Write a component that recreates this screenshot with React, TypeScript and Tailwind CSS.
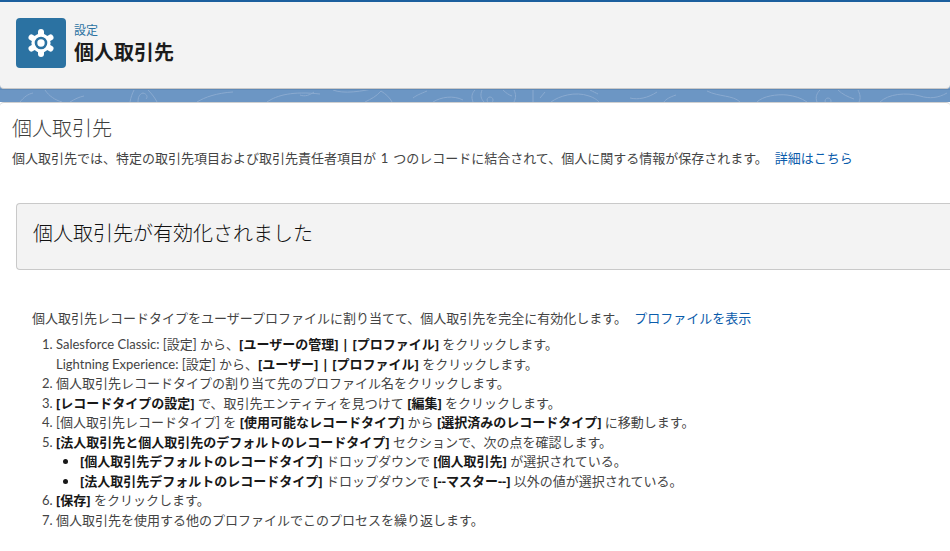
export default function App() {
  const b = "font-bold text-[#181818] font-['Noto_Sans','Noto_Sans_CJK_JP',sans-serif]";
  return (
    <div className="w-[950px] h-[551px] overflow-hidden bg-white text-[#444444] text-[13px] leading-[19.5px]" style={{ fontFamily: '"Lato","Noto Sans CJK JP",sans-serif' }}>
      <div className="bg-[#6c96c4]">
        <div className="h-[2px] bg-[#1b5f9e]" />
        <div className="h-[87px] bg-[#f3f3f3] rounded-b-[4px] border-b border-[#c9c9c9] flex items-start pt-4 pl-4 gap-2">
          <div className="w-[50px] h-[50px] rounded-[4px] bg-[#2b72a2] flex items-center justify-center">
            <svg viewBox="0 0 28 28" className="w-[28px] h-[28px]" fill="none">
              <circle cx="14" cy="14" r="9.6" fill="#fff" />
              <g stroke="#fff" strokeWidth="6" strokeLinecap="round">
                <path d="M14 14V3" />
                <path d="M14 14v11" />
                <path d="M14 14l9.5-5.5" />
                <path d="M14 14l9.5 5.5" />
                <path d="M14 14L4.5 8.5" />
                <path d="M14 14L4.5 19.5" />
              </g>
              <circle cx="14" cy="14" r="5" fill="#fff" stroke="#2b72a2" strokeWidth="2.6" />
            </svg>
          </div>
          <div className="flex flex-col mt-[5px]">
            <div className="text-[12px] leading-[16px] text-[#2b72a2]">設定</div>
            <div className="text-[20px] leading-[26px] font-bold text-[#1c1c1c]">個人取引先</div>
          </div>
        </div>
        <div className="h-[13px] overflow-hidden border-t border-[#5f89b6]">
          <svg viewBox="0 0 950 12" className="w-[950px] h-[12px]" fill="none" stroke="#8aaad0" strokeWidth="1">
            <path d="M20 12c4-5 8-8 13-9M45 0c4 6 10 10 17 12M70 12c5-3 9-5 14-6M130 12c1-5 2-8 4-12M138 12c0-4 1-8 5-9 4 1 5 4 3 6M148 0c4 4 7 8 9 12M197 12c8-5 20-9 36-10M267 12c10-7 26-11 53-8" />
            <path d="M300 5c5 2 10 0 14-3M333 0c10 4 28 2 47-3M365 12c6-3 12-6 16-11M381 1c5 3 9 7 11 11M413 8c4-3 7-4 14-7M433 12c8-5 20-7 30-2M473 12c-2-5-1-9 2-12M482 0c-2 5-1 9 2 12M490 7a3 3 0 1 0 .1 0M503 0c3 3 6 5 9 6M514 0c2 4 2 8 0 12M533 0v12M540 8l5-6M551 12c8-6 24-11 38-6 6 2 8 4 10 6M590 0c4 2 6 3 8 4" />
            <path d="M630 8c8 2 18 0 27-6M664 12c2-3 6-5 12-7M707 1c12 6 26 4 33 11M757 12c6-6 20-8 30-7 8 1 14 3 20 7M817 12c-2-5 0-9 3-12M828 8a3 3 0 1 0 .1 0M838 0c4 4 10 7 16 9M858 0c2 4 3 8 1 12M880 12c8-8 26-10 40-6 10 3 18 2 27-3" />
          </svg>
        </div>
      </div>
      <div className="bg-white rounded-t-[4px] border-t border-[#d0d0d0]">
        <div className="pl-3 pt-[12px] text-[20px] leading-[26px] font-light text-[#3e3e3c]">個人取引先</div>
        <div className="pl-3 mt-[8px] whitespace-nowrap [word-spacing:1.5px]">
          個人取引先では、特定の取引先項目および取引先責任者項目が 1 つのレコードに結合されて、個人に関する情報が保存されます。
          <a className="ml-[7px] text-[#0b5cab]">詳細はこちら</a>
        </div>
        <div className="ml-4 mt-[34px] h-[67px] bg-[#f3f3f3] border border-[#c9c9c9] border-r-0 rounded-l-[4px] pl-4 pb-[4px] flex items-center text-[20px] font-light text-[#111111]">
          個人取引先が有効化されました
        </div>
        <div className="pl-[32px] mt-[39px] whitespace-nowrap">
          個人取引先レコードタイプをユーザープロファイルに割り当てて、個人取引先を完全に有効化します。 <a className="ml-[4px] text-[#0b5cab]">プロファイルを表示</a>
        </div>
        <ol className="list-decimal pl-[56px] mt-[7px] whitespace-nowrap">
          <li>Salesforce Classic: [設定] から、<span className={b}>[ユーザーの管理] | [プロファイル]</span> をクリックします。<br />Lightning Experience: [設定] から、<span className={b}>[ユーザー] | [プロファイル]</span> をクリックします。</li>
          <li>個人取引先レコードタイプの割り当て先のプロファイル名をクリックします。</li>
          <li><span className={b}>[レコードタイプの設定]</span> で、取引先エンティティを見つけて <span className={b}>[編集]</span> をクリックします。</li>
          <li>[個人取引先レコードタイプ] を <span className={b}>[使用可能なレコードタイプ]</span> から <span className={b}>[選択済みのレコードタイプ]</span> に移動します。</li>
          <li><span className={b}>[法人取引先と個人取引先のデフォルトのレコードタイプ]</span> セクションで、次の点を確認します。
            <ul className="list-disc pl-[24px] -mt-[2px] mb-[2px] marker:text-[#181818] marker:text-[16px]">
              <li className="h-[19.5px]"><span className={b}>[個人取引先デフォルトのレコードタイプ]</span> ドロップダウンで <span className={b}>[個人取引先]</span> が選択されている。</li>
              <li className="h-[19.5px]"><span className={b}>[法人取引先デフォルトのレコードタイプ]</span> ドロップダウンで <span className={b}>[--マスター--]</span> 以外の値が選択されている。</li>
            </ul>
          </li>
          <li><span className={b}>[保存]</span> をクリックします。</li>
          <li>個人取引先を使用する他のプロファイルでこのプロセスを繰り返します。</li>
        </ol>
      </div>
    </div>
  );
}
